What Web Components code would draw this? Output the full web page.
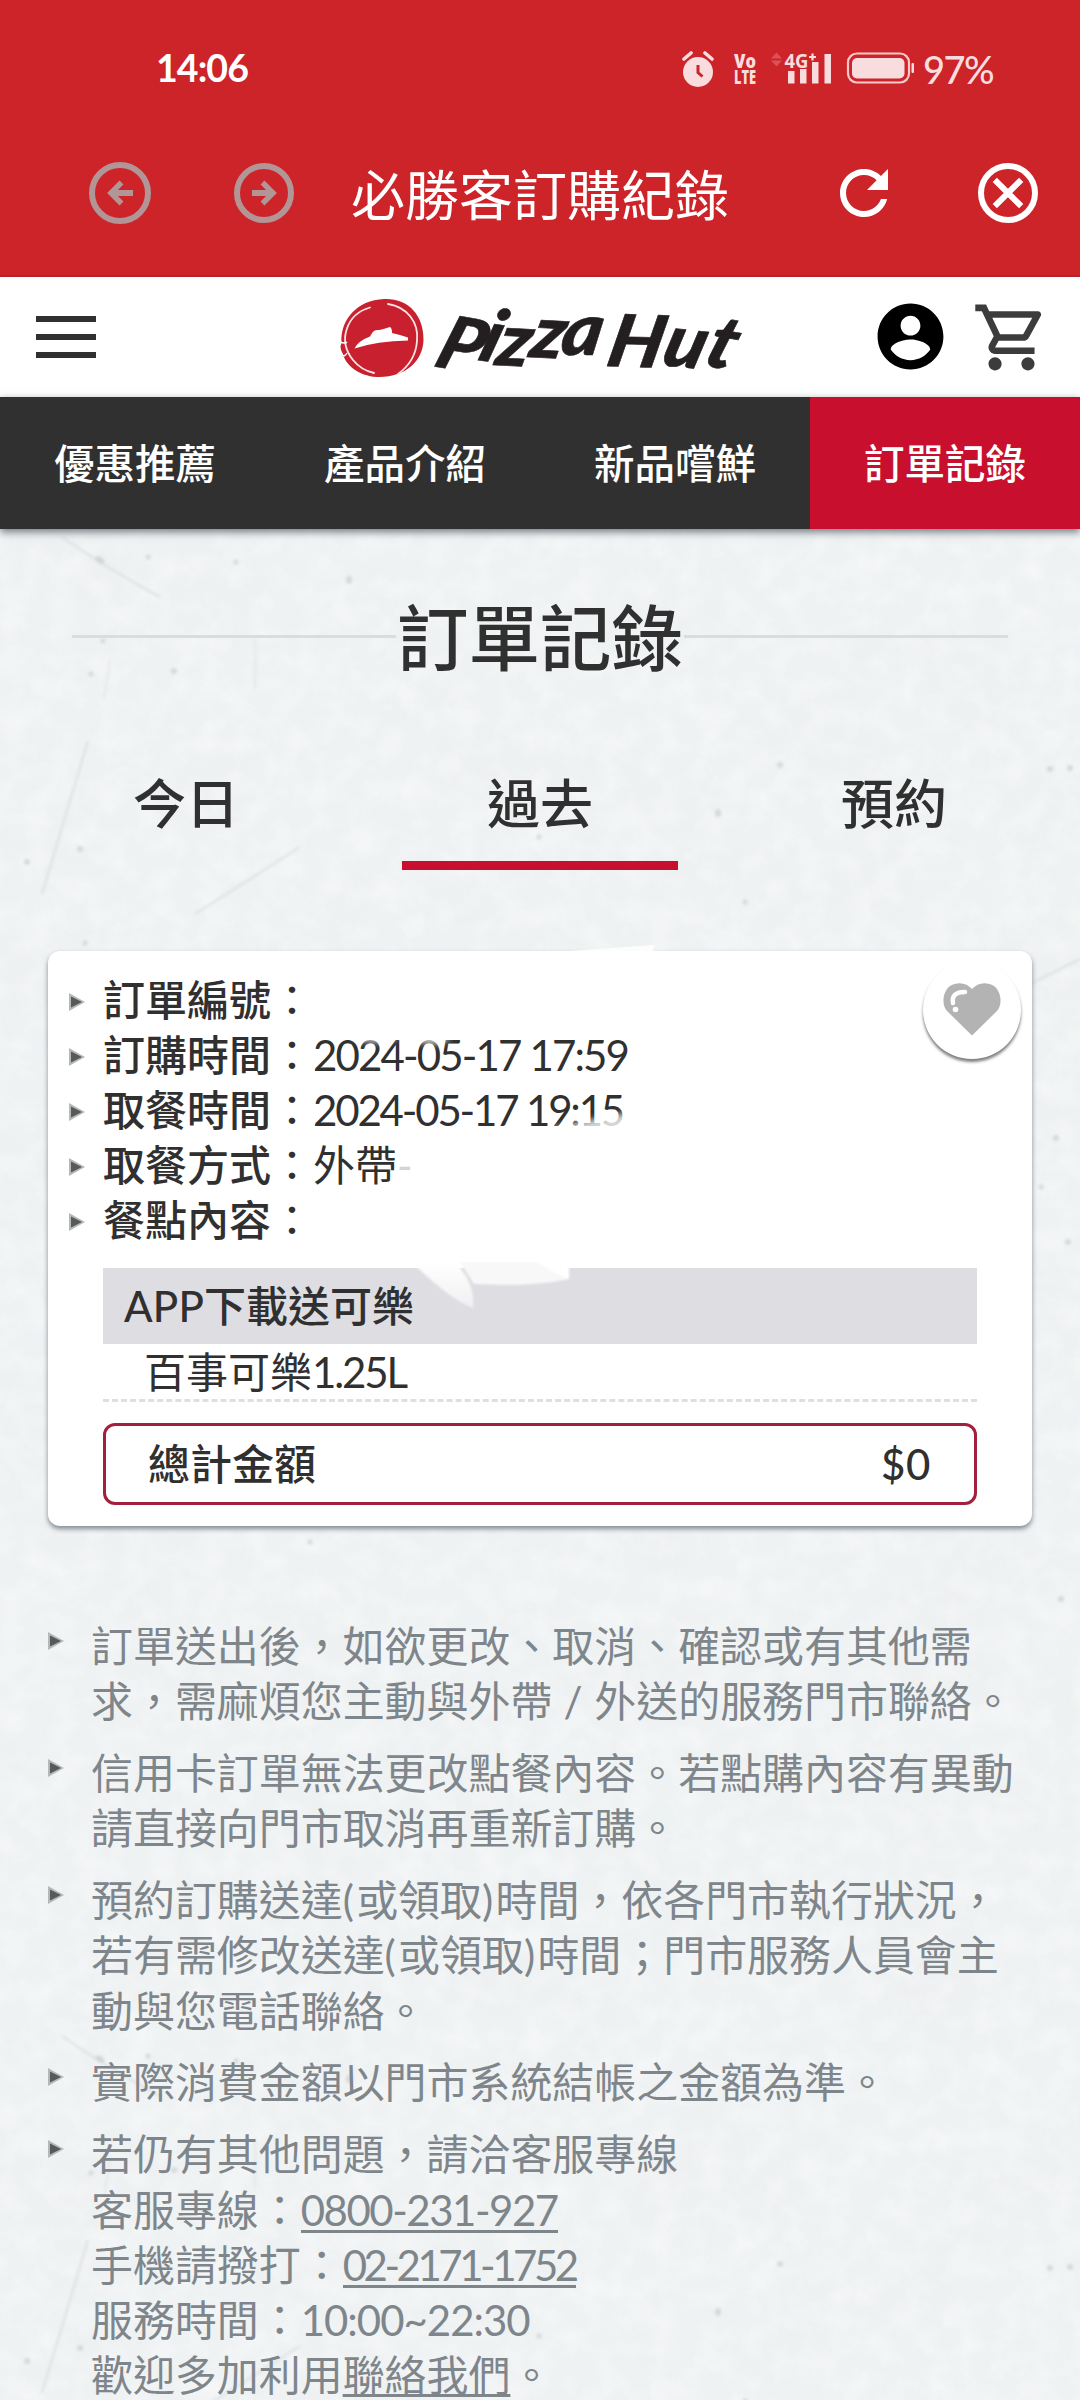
<!DOCTYPE html>
<html lang="zh-Hant">
<head>
<meta charset="utf-8">
<title>必勝客訂購紀錄</title>
<style>
html,body{margin:0;padding:0}
body{width:1080px;height:2400px;overflow:hidden;background:#eff2f3;font-family:Lato,"Noto Sans CJK TC",sans-serif;color:#303030}
</style>
</head>
<body>
<order-page></order-page>
<script>
const define=(name,html,setup)=>customElements.define(name,class extends HTMLElement{
  connectedCallback(){
    if(!this.shadowRoot){
      const t=document.createElement('template');
      t.innerHTML=html;
      this.attachShadow({mode:'open'}).append(t.content.cloneNode(true));
    }
    if(setup)setup.call(this,this.shadowRoot);
  }
});

/* Text run spread to an exact advance width. */
define('fit-text',`<style>:host{display:inline-block;white-space:pre;line-height:inherit}</style><slot></slot>`,function(){
  const fit=()=>{
    this.style.letterSpacing='0px';
    this.style.width='auto';
    const target=+this.getAttribute('w');
    const now=this.getBoundingClientRect().width;
    this.style.letterSpacing=((target-now)/[...this.textContent].length)+'px';
    this.style.width=target+'px';
  };
  fit();
  requestAnimationFrame(fit);
});

define('status-bar',`<style>
:host{display:flex;height:139px;align-items:flex-start;color:#fff;padding:0 87px 0 156px;box-sizing:border-box}
.time{font-size:37.5px;font-weight:700;line-height:44px;margin-top:46px}
.right{margin-left:auto;display:flex;align-items:flex-start;color:#f8dcde}
.pct{font-size:38px;font-weight:500;line-height:44px;margin:47px 0 0 7px}
svg{display:block;margin-top:35px}
text{font-family:"Open Sans",sans-serif;font-weight:800}
</style>
<div class="time"><fit-text w="92">14:06</fit-text></div>
<div class="right">
<svg width="234" height="60" viewBox="682 36 234 60" fill="#f8dcde">
<circle cx="698" cy="73" r="15"/><path d="M684 60l7-6M712 60l-7-6" stroke="#f8dcde" stroke-width="3.6" stroke-linecap="round"/>
<path d="M698 66v7.5l4.5 4" fill="none" stroke="#c9262c" stroke-width="3"/>
<text x="734" y="68.500" font-size="19" textLength="22" lengthAdjust="spacingAndGlyphs">Vo</text>
<text x="734" y="84.500" font-size="19" textLength="22" lengthAdjust="spacingAndGlyphs">LTE</text>
<path d="M771 59.500l5.500-6 5.500 6zM771 61.500l5.500 6 5.500-6z" fill="#da5257"/>
<text x="784.500" y="68.500" font-size="20" textLength="24" lengthAdjust="spacingAndGlyphs" style="font-weight:700">4G</text>
<path d="M809 58h7M812.500 54.500v7" stroke="#f8dcde" stroke-width="2.200"/>
<path d="M788 72h6.500v12.500H788zM800 70h6.500v14.500H800zM812 63h6.500v21.500H812zM824.500 55h6.500v29.500h-6.500z"/>
<rect x="848" y="54.500" width="61" height="29" rx="9" fill="none" stroke="#f8c8ca" stroke-width="2.200"/>
<rect x="852" y="59" width="52.500" height="20.500" rx="5"/><rect x="911.500" y="64" width="2.500" height="10" rx="1"/>
</svg>
<div class="pct"><fit-text w="70">97%</fit-text></div>
</div>`);

define('app-bar',`<style>
:host{display:flex;height:138px;align-items:flex-start;box-sizing:border-box;padding:0 36px 0 84px;border-bottom:2px solid #b3272c}
h1{margin:0 0 0 51px;font-size:54px;line-height:64px;font-weight:400;color:#fff;padding-top:25px;width:378px;white-space:nowrap}
svg{display:block;flex:none}
</style>
<svg style="margin-top:18px" width="72" height="72" viewBox="0 0 72 72" fill="none" stroke="#b29596" stroke-width="6"><circle cx="36" cy="36" r="28"/><path d="M49 36H28" stroke-width="6"/><path d="M37.500 25.500L27 36L37.500 46.500" stroke-width="5.500"/></svg>
<svg style="margin:18px 0 0 72px" width="72" height="72" viewBox="0 0 72 72" fill="none" stroke="#b29596" stroke-width="6"><circle cx="36" cy="36" r="27"/><path d="M24 36H44" /><path d="M34.500 25.500L45 36L34.500 46.500" stroke-width="5.500"/></svg>
<h1>必勝客訂購紀錄</h1>
<svg style="margin:18px 0 0 99px" width="72" height="72" viewBox="0 0 24 24" fill="#fff"><path d="M17.650 6.350C16.200 4.900 14.210 4 12 4c-4.420 0-7.990 3.580-7.990 8s3.570 8 7.990 8c3.730 0 6.840-2.550 7.730-6h-2.080c-.82 2.330-3.040 4-5.650 4-3.310 0-6-2.690-6-6s2.690-6 6-6c1.660 0 3.140.69 4.220 1.780L13 11h7V4l-2.350 2.350z"/></svg>
<svg style="margin:18px 0 0 auto" width="72" height="72" viewBox="0 0 24 24" fill="none" stroke="#fff" stroke-width="2"><circle cx="12" cy="12" r="9"/><path d="M7.600 7.600l8.800 8.800M16.400 7.600l-8.800 8.800"/></svg>`);

define('site-header',`<style>
:host{display:flex;align-items:center;height:120px;background:#fff;padding:0 29px 0 36px;box-sizing:border-box}
.menu{display:flex;flex-direction:column;gap:12px;width:60px}
.menu i{height:6px;background:#303030}
svg{display:block;flex:none}
text{font-family:Lato,sans-serif;font-weight:900;font-style:italic;fill:#231f20;stroke:#231f20;stroke-width:.6;stroke-linejoin:round}
</style>
<div class="menu"><i></i><i></i><i></i></div>
<svg style="margin-left:240px" width="420" height="100" viewBox="336 287 420 100">
<path d="M341.500 343C340 320 357 300 384 299C408 298 424 315 423.500 340C423 361 405 378 377 377C358 376 345 364 343 354Q339 348 341.500 343z" fill="#c8202f"/>
<path d="M370 307.500C347 314 337 340 353 360Q361 370 374 373M388 304C407 307 419 322 417 341C416 356 409 366 398 374" fill="none" stroke="#fbe3e4" stroke-width="1.800" stroke-linecap="round"/>
<path d="M340 342q5 2 7 0M342 355q3 2 5 -2" stroke="#fff" stroke-width="1.500" fill="none"/>
<path d="M354.500 348.500Q358 341 370 336.500C373 331 374 330 379.500 330Q384 329 390 327Q392 328 392 333Q401 335 408 337.500V340.500Q377 341 354.500 348.500z" fill="#fff"/>
<g transform="translate(430 366) skewX(-10)"><text x="2" y="0" dx="0 -2 -1 -1 -2 0 -9 0 0" dy="0 -6 5 -8 -2 10 1 -1 0" rotate="10 8 3 3 0 0 2 6 10" font-size="72" textLength="298" lengthAdjust="spacingAndGlyphs">Pizza Hut</text></g>
</svg>
<svg style="margin:0 0 0 auto" width="79" height="79" viewBox="0 0 24 24"><path d="M12 2C6.480 2 2 6.480 2 12s4.480 10 10 10 10-4.480 10-10S17.520 2 12 2zm0 3.700c1.660 0 3 1.340 3 3s-1.340 3-3 3-3-1.340-3-3 1.340-3 3-3zm0 13.500c-2.500 0-4.710-1.280-6-3.220.03-1.990 4-3.080 6-3.080 1.990 0 5.970 1.090 6 3.080-1.290 1.940-3.500 3.220-6 3.220z" transform="translate(0 -.3)" fill-rule="evenodd"/></svg>
<svg style="margin-left:22px" width="79" height="79" viewBox="0 0 24 24" fill="#3c3c3c"><path d="M15.550 13c.75 0 1.410-.41 1.750-1.030l3.580-6.490c.37-.66-.11-1.480-.87-1.480H5.210l-.94-2H1v2h2l3.600 7.590-1.350 2.440C4.520 15.370 5.480 17 7 17h12v-2H7l1.100-2h7.450zM6.160 6h12.150l-2.760 5H8.530L6.160 6zM7 18c-1.100 0-1.990.9-1.990 2S5.900 22 7 22s2-.9 2-2-.9-2-2-2zm10 0c-1.100 0-1.990.9-1.990 2s.89 2 1.990 2 2-.9 2-2-.9-2-2-2z"/></svg>`);

define('nav-item',`<style>
:host{display:flex;flex:1;align-items:center;justify-content:center;color:#fff;font-size:40.500px;font-weight:500;line-height:60px;padding-top:1px;white-space:nowrap}
:host([active]){background:#c8102e}
</style><slot></slot>`);
define('nav-bar',`<style>:host{display:flex;height:132px;background:#303030;box-shadow:0 3px 8px rgba(70,80,88,.75)}</style><slot></slot>`);

define('page-title',`<style>
:host{display:flex;align-items:center;height:110px;margin:53px 72px 0;font-size:71.500px;font-weight:500;line-height:100px;white-space:nowrap}
i{flex:1;height:3px;background:#dadddd;margin-top:-1px}
span{margin:0 1px}
</style><i></i><span><slot></slot></span><i></i>`);

define('tab-item',`<style>
:host{display:flex;flex-direction:column;align-items:center;width:276px;font-size:53px;font-weight:500;line-height:80px}
i{width:276px;height:9px;margin-top:17px}
:host([active]) i{background:#c8102e}
</style><span><slot></slot></span><i></i>`);
define('tab-row',`<style>:host{display:flex;justify-content:space-between;padding:72px 48px 0}</style><slot></slot>`);

const arrow=`<svg width="16" height="18" viewBox="0 0 16 18"><path d="M0 0L16 9L0 18z" fill="#b4b8b8"/><path d="M2 3.500L13 9L2 14.500z" fill="#585a5a"/></svg>`;

define('info-row',`<style>
:host{display:flex;align-items:center;height:55.100px;font-size:42px;line-height:55px;white-space:nowrap}
svg{margin:2px 18px 0 21px;display:block;flex:none}
b{font-weight:500}
</style>${arrow}<b><slot name="label"></slot></b>：<slot></slot>`);

define('fav-button',`<style>
:host{position:absolute;left:875px;top:10px;width:98px;height:98px;border-radius:50%;background:#fff;box-shadow:0 3px 3px rgba(0,0,0,.5);display:block}
svg{display:block;margin:22px 0 0 20px}
</style><svg width="58" height="53" viewBox="0 0 58 53"><path d="M29 52.500L4 28C-2 21 0 8 7 3C15-2 24 0 29 6C34 0 43-2 51 3C58 8 60 21 54 28z" fill="#b3b3b3"/><path d="M10 20Q8 9 22 9" fill="none" stroke="#fff" stroke-width="4.500" stroke-linecap="round"/><circle cx="12.500" cy="26.500" r="2.800" fill="#fff"/></svg>`);

define('order-card',`<style>
:host{display:block;position:relative;margin:81px 48px 0;height:575px;padding-top:22px;box-sizing:border-box;background:#fff;border-radius:12px;box-shadow:0 3px 5px rgba(70,85,95,.65)}
.head{margin:19.500px 55px 0;height:76px;background:#dedde2;font-size:42px;font-weight:500;line-height:77px;padding-left:21px;white-space:nowrap;display:flex}
.item{margin:0 55px;height:55px;padding-left:41px;font-size:42px;line-height:56px;border-bottom:3px dashed #dedfe3;white-space:nowrap;display:flex}
.total{margin:21px 55px 0;height:82px;box-sizing:border-box;border:3px solid #a3203c;border-radius:12px;padding:1px 43px 0 42px;display:flex;justify-content:space-between;align-items:center;font-size:42px;font-weight:500;line-height:60px}
.wipe{position:absolute;left:242px;top:-8px;pointer-events:none}
.g{color:#d4d4d4}
</style>
<info-row><span slot="label">訂單編號</span></info-row>
<info-row><span slot="label">訂購時間</span><fit-text w="315">2024-05-17 17:59</fit-text></info-row>
<info-row><span slot="label">取餐時間</span><fit-text w="310">2024-05-17 19:15</fit-text></info-row>
<info-row><span slot="label">取餐方式</span>外帶<span class="g">-</span></info-row>
<info-row><span slot="label">餐點內容</span></info-row>
<div class="head"><fit-text w="80">APP</fit-text>下載送可樂</div>
<div class="item">百事可樂<fit-text w="94">1.25L</fit-text></div>
<div class="total"><span>總計金額</span><fit-text w="50">$0</fit-text></div>
<svg class="wipe" width="450" height="380" viewBox="290 943 450 380">
<defs><linearGradient id="w" x1="0" y1="0" x2="0" y2="1"><stop offset="0" stop-color="#fff"/><stop offset="1" stop-color="#f0f0f2"/></linearGradient><filter id="b"><feGaussianBlur stdDeviation="3"/></filter><filter id="c"><feGaussianBlur stdDeviation=".8"/></filter></defs>
<g filter="url(#c)"><path d="M460 1262H569V1279Q535 1287 474 1284z" fill="#f8f8f9"/><path d="M536 1262H569V1279Q555 1273 536 1262z" fill="#fff"/><path d="M412 1262H455Q476 1284 473 1308Q449 1299 412 1262z" fill="url(#w)"/></g>
<path d="M570 951Q610 948 654 945L653 952H570z" fill="#fff" opacity=".85"/>
<g filter="url(#b)" fill="#fff"><ellipse cx="376" cy="1036" rx="22" ry="7" opacity=".7"/><ellipse cx="432" cy="1036" rx="18" ry="9" opacity=".7"/><path d="M550 1129Q590 1119 632 1112V1140H550z" opacity=".8"/></g>
</svg>
<fav-button></fav-button>`);

define('note-item',`<style>
:host{display:flex;align-items:flex-start;margin-bottom:16.800px;font-size:41.950px;line-height:55.150px;white-space:nowrap;color:#7e868b;font-weight:400}
svg{flex:none;margin:13px 27px 0 0;display:block}
</style>${arrow}<div><slot></slot></div>`);
define('tel-link',`<style>:host{text-decoration:underline;text-decoration-thickness:3px;text-underline-offset:3px;text-decoration-skip-ink:none}
:host([num]){display:inline-block;text-decoration:none;line-height:38px;height:39px;border-bottom:3px solid #7e868b;vertical-align:baseline}</style><slot></slot>`);

define('wall-texture',`<style>:host{position:absolute;left:0;top:529px;width:1080px;height:1871px;z-index:-1;display:block}svg{display:block}</style>
<svg width="1080" height="1871">
<defs>
<filter id="n" x="0" y="0" width="100%" height="100%"><feTurbulence type="fractalNoise" baseFrequency=".008 .01" numOctaves="6" seed="8"/><feColorMatrix values="0 0 0 0 .84  0 0 0 0 .85  0 0 0 0 .86  1.600 0 0 0 -.6"/></filter>
<filter id="m" x="0" y="0" width="100%" height="100%"><feTurbulence type="fractalNoise" baseFrequency=".04" numOctaves="4" seed="3"/><feColorMatrix values="0 0 0 0 1  0 0 0 0 1  0 0 0 0 1  0 1.800 0 0 -.7"/></filter>
<filter id="s"><feGaussianBlur stdDeviation="1.500"/></filter>
<g id="marks" filter="url(#s)" fill="#c3c7c8" stroke="#dcdfe0" fill-opacity=".6">
<g fill="none" stroke-width="2"><path d="M62 8Q105 38 160 68"/><path d="M88 212L42 365" /><path d="M300 318L225 366 195 385"/><path d="M1080 430L1010 465"/><path d="M255 110v50M110 130l-6 40" opacity=".6"/></g>
<g stroke="none"><ellipse cx="100" cy="31" rx="5" ry="3" transform="rotate(35 100 31)"/><circle cx="148" cy="28" r="2.500"/><circle cx="236" cy="33" r="2.500"/><ellipse cx="349" cy="51" rx="3" ry="4"/><circle cx="103" cy="112" r="2.500"/><circle cx="174" cy="142" r="3"/><circle cx="91" cy="145" r="2.500"/><circle cx="780" cy="236" r="3"/><circle cx="1050" cy="240" r="3"/><circle cx="1070" cy="239" r="3"/><ellipse cx="718" cy="284" rx="3" ry="4"/><circle cx="539" cy="308" r="2.500"/><circle cx="80" cy="320" r="3"/><circle cx="27" cy="333" r="3"/><circle cx="745" cy="373" r="2.500"/><circle cx="85" cy="414" r="2.500"/><circle cx="1068" cy="713" r="3"/><circle cx="1056" cy="609" r="3"/><circle cx="1041" cy="658" r="2.500"/><circle cx="1061" cy="1070" r="3"/><circle cx="310" cy="1013" r="2.500"/></g></g>
</defs>
<rect width="1080" height="1871" fill="#eff2f3"/>
<rect width="1080" height="1871" filter="url(#n)" opacity=".5"/>
<rect width="1080" height="1871" filter="url(#m)" opacity=".4"/>
<use href="#marks"/><use href="#marks" y="1499"/>
</svg>`);

define('order-page',`<style>
:host{display:block;position:relative;width:1080px;height:2400px;overflow:hidden;z-index:0}
header{background:#cc2429}
.notes{display:flex;flex-direction:column;padding:93px 0 0 48px}
</style>
<wall-texture></wall-texture>
<header><status-bar></status-bar><app-bar></app-bar></header>
<site-header></site-header>
<nav-bar><nav-item>優惠推薦</nav-item><nav-item>產品介紹</nav-item><nav-item>新品嚐鮮</nav-item><nav-item active>訂單記錄</nav-item></nav-bar>
<page-title>訂單記錄</page-title>
<tab-row><tab-item>今日</tab-item><tab-item active>過去</tab-item><tab-item>預約</tab-item></tab-row>
<order-card></order-card>
<div class="notes">
<note-item>訂單送出後，如欲更改、取消、確認或有其他需<br>求，需麻煩您主動與外帶<fit-text w="42"> / </fit-text>外送的服務門市聯絡。</note-item>
<note-item>信用卡訂單無法更改點餐內容。若點購內容有異動<br>請直接向門市取消再重新訂購。</note-item>
<note-item>預約訂購送達<fit-text w="13.5">(</fit-text>或領取<fit-text w="13.5">)</fit-text>時間，依各門市執行狀況，<br>若有需修改送達<fit-text w="13.5">(</fit-text>或領取<fit-text w="13.5">)</fit-text>時間；門市服務人員會主<br>動與您電話聯絡。</note-item>
<note-item>實際消費金額以門市系統結帳之金額為準。</note-item>
<note-item>若仍有其他問題，請洽客服專線<br>客服專線：<tel-link num><fit-text w="257">0800-231-927</fit-text></tel-link><br>手機請撥打：<tel-link num><fit-text w="233">02-2171-1752</fit-text></tel-link><br>服務時間：<fit-text w="229">10:00~22:30</fit-text><br>歡迎多加利用<tel-link>聯絡我們</tel-link>。</note-item>
</div>`);
</script>
</body>
</html>
